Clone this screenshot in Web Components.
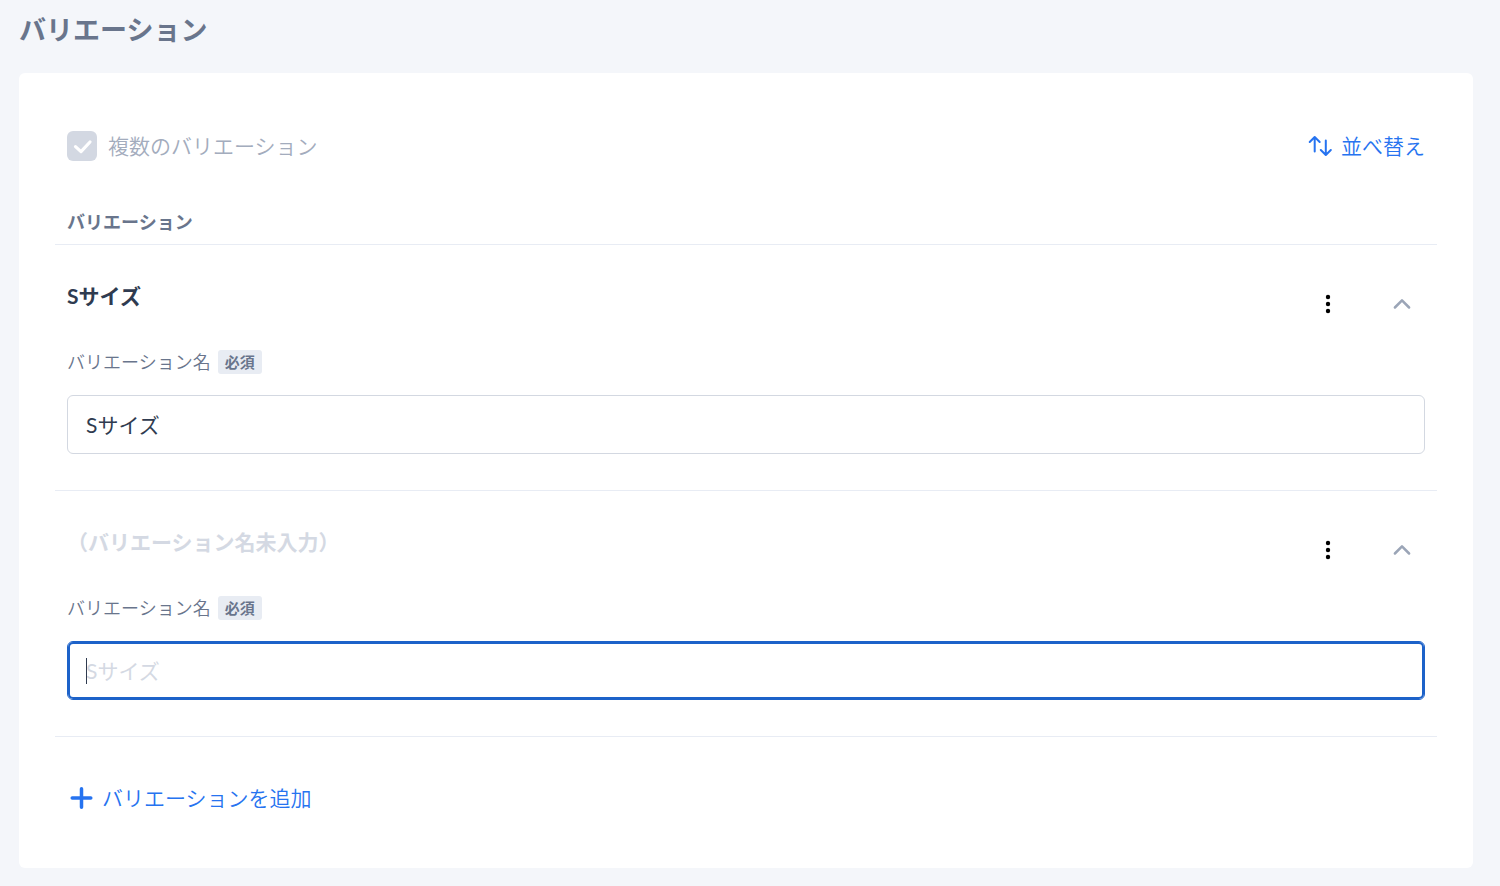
<!DOCTYPE html>
<html lang="ja">
<head>
<meta charset="utf-8">
<meta name="viewport" content="width=device-width, initial-scale=1">
<title>バリエーション</title>
<style>
  body {
    margin: 0;
    background: #f4f6fa;
    color: #2f3b50;
    font-family: Lato, "Noto Sans CJK JP", sans-serif;
    font-size: 21px;
    font-weight: 350;
    line-height: 30px;
    --muted: #69758c;
    --faint: #d4d9e3;
    --line: #e8ecf4;
    --link: #2673f0;
  }
</style>
</head>
<body>
<variation-panel heading="バリエーション">
  <check-option slot="option" label="複数のバリエーション"></check-option>
  <link-button slot="option" icon="sort">並べ替え</link-button>
  <span slot="caption">バリエーション</span>
  <variation-item name="Sサイズ"></variation-item>
  <variation-item active></variation-item>
  <link-button slot="footer" icon="plus">バリエーションを追加</link-button>
</variation-panel>

<script>
class VariationPanel extends HTMLElement {
  connectedCallback() {
    const root = this.attachShadow({ mode: 'open' });
    root.innerHTML = `
      <style>
        :host { display: block; padding: 12px 27px 18px 19px; }
        h1 { margin: 0 0 25px; font-size: 27px; line-height: 36px; font-weight: 700; color: var(--muted); }
        .card { background: #fff; border-radius: 6px; padding: 58px 36px 55px; }
        .options { display: flex; justify-content: space-between; align-items: center; padding: 0 12px; }
        h2 { margin: 0; padding: 46px 12px 7px; font-size: 18px; line-height: 30px; font-weight: 700;
             color: var(--muted); border-bottom: 1px solid var(--line); }
        .footer { padding: 46px 12px 0 2px; }
      </style>
      <h1></h1>
      <section class="card">
        <div class="options"><slot name="option"></slot></div>
        <h2><slot name="caption"></slot></h2>
        <slot></slot>
        <div class="footer"><slot name="footer"></slot></div>
      </section>`;
    root.querySelector('h1').textContent = this.getAttribute('heading');
  }
}

class CheckOption extends HTMLElement {
  connectedCallback() {
    const root = this.attachShadow({ mode: 'open' });
    root.innerHTML = `
      <style>
        :host { display: block; }
        label { display: flex; align-items: center; gap: 11px; color: #a3acbd; }
        .box { display: grid; width: 30px; height: 30px; }
        input, svg { grid-area: 1 / 1; }
        input { appearance: none; margin: 0; width: 30px; height: 30px; border-radius: 6px; background: #d3d8e2; }
        svg { pointer-events: none; }
      </style>
      <label>
        <span class="box">
          <input type="checkbox" checked disabled>
          <svg width="30" height="30" viewBox="0 0 30 30" fill="none" stroke="#fff" stroke-width="3.2" stroke-linecap="round" stroke-linejoin="round"><path d="M8.500 15.600l5.500 5L23 11"/></svg>
        </span>
        <span class="text"></span>
      </label>`;
    root.querySelector('.text').textContent = this.getAttribute('label');
  }
}

const ICONS = {
  sort: '<g stroke-width="2"><path d="M6.700 17.500V3.500M1.700 8L6.700 3L11.700 8"/><path d="M17.800 6.500V20.500M12.800 16L17.800 21L22.800 16"/></g>',
  plus: '<path stroke-width="3.500" d="M12.500 2.700V21.300M3.200 12H21.800"/>'
};

class LinkButton extends HTMLElement {
  connectedCallback() {
    const root = this.attachShadow({ mode: 'open' });
    root.innerHTML = `
      <style>
        :host { display: block; }
        button { display: flex; align-items: center; gap: 9px; margin: 0; padding: 0; border: 0;
                 background: none; font: inherit; color: var(--link); cursor: pointer; }
        :host([icon="plus"]) button { padding-left: 12px; }
      </style>
      <button type="button">
        <svg width="24" height="24" viewBox="0 0 24 24" fill="none" stroke="currentColor" stroke-linecap="round" stroke-linejoin="round" aria-hidden="true">${ICONS[this.getAttribute('icon')]}</svg>
        <slot></slot>
      </button>`;
  }
}

class VariationItem extends HTMLElement {
  connectedCallback() {
    const name = this.getAttribute('name') || '';
    const root = this.attachShadow({ mode: 'open' });
    root.innerHTML = `
      <style>
        :host { display: block; padding: 36px 12px; border-bottom: 1px solid var(--line); }
        .head { display: flex; align-items: flex-start; height: 46px; margin-bottom: 23px; }
        h3 { flex: 1; margin: 0; font-size: 21px; line-height: 30px; font-weight: 700; }
        h3.empty { color: var(--faint); }
        .actions { display: flex; gap: 28px; }
        .actions button { display: grid; place-items: center; width: 46px; height: 46px; padding: 0;
                          border: 0; background: none; cursor: pointer; }
        .caption { display: flex; align-items: center; gap: 7px; height: 24px; margin-bottom: 21px; }
        label { font-size: 18px; line-height: 24px; color: var(--muted); }
        .badge { padding: 0 7px; border-radius: 3px; background: #e8ecf3; color: var(--muted);
                 font-size: 15px; line-height: 24px; font-weight: 700; }
        .field { position: relative; display: flex; }
        input { box-sizing: border-box; flex: 1; min-width: 0; height: 59px; margin: 0; padding: 0 18px 2px;
                border: 1px solid #d3d8e1; border-radius: 6px; outline: 0; background: #fff;
                font: inherit; font-weight: 400; color: #2f3b50; caret-color: transparent; }
        input::placeholder { color: var(--faint); opacity: 1; }
        :host([active]) input { padding-bottom: 0; border-color: #1d62c9; box-shadow: inset 0 0 0 2px #1d62c9; }
        .caret { display: none; position: absolute; left: 19px; top: 17px; width: 1px; height: 26px; background: #2f3b50; }
        :host([active]) .caret { display: block; }
      </style>
      <div class="head">
        <h3></h3>
        <div class="actions">
          <button type="button" aria-label="メニュー"><svg width="24" height="24" viewBox="0 0 24 24"><circle cx="12" cy="5" r="2.200"/><circle cx="12" cy="12" r="2.200"/><circle cx="12" cy="19" r="2.200"/></svg></button>
          <button type="button" aria-label="閉じる"><svg width="24" height="24" viewBox="0 0 24 24" fill="none" stroke="#9ba5b7" stroke-width="2.500" stroke-linecap="round" stroke-linejoin="round"><path d="M4.900 15.500L12 8.300L19.100 15.500"/></svg></button>
        </div>
      </div>
      <div class="caption"><label for="name">バリエーション名</label><span class="badge">必須</span></div>
      <div class="field"><input id="name" type="text" placeholder="Sサイズ" required><span class="caret"></span></div>`;
    const title = root.querySelector('h3');
    title.textContent = name || '（バリエーション名未入力）';
    title.classList.toggle('empty', !name);
    root.querySelector('input').value = name;
  }
}

customElements.define('check-option', CheckOption);
customElements.define('link-button', LinkButton);
customElements.define('variation-item', VariationItem);
customElements.define('variation-panel', VariationPanel);
</script>
</body>
</html>
